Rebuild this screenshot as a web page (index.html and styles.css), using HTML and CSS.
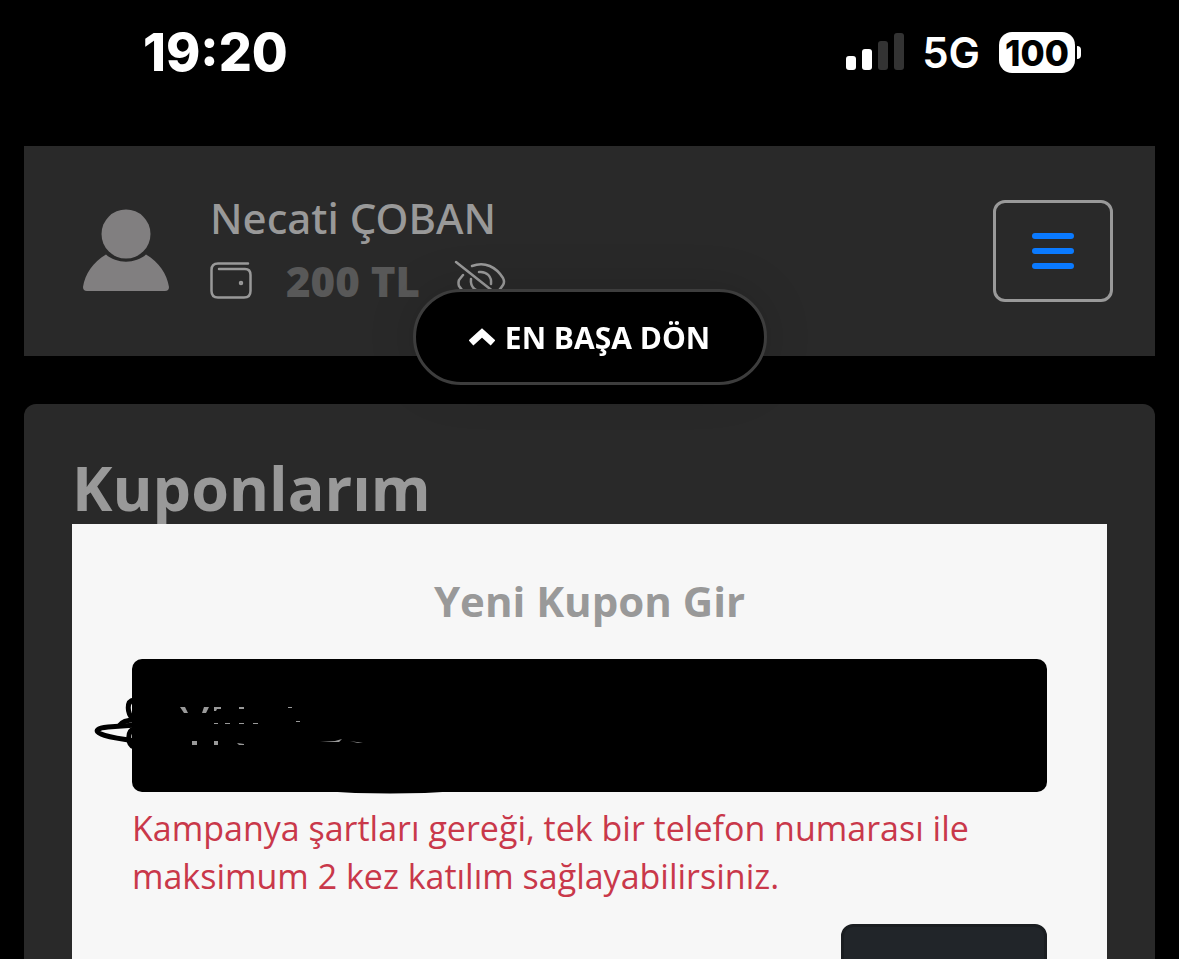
FILE: index.html
```html
<!DOCTYPE html>
<html lang="tr">
<head>
	<meta charset="UTF-8">
	<meta name="viewport" content="width=device-width, initial-scale=1">
	<title>Kuponlarım</title>
	<link rel="stylesheet" href="styles.css">
</head>
<body>
	<div class="statusBar">
		<span class="clock">19:20</span>
		<div class="statusRight">
			<svg class="signal" viewBox="0 0 58 38" aria-hidden="true">
				<rect x="0" y="23" width="10" height="14" rx="3" fill="#fff"/>
				<rect x="16" y="16" width="10" height="21" rx="3" fill="#fff"/>
				<rect x="32" y="8" width="10" height="29" rx="3" fill="#333"/>
				<rect x="48" y="0" width="10" height="37" rx="3" fill="#333"/>
			</svg>
			<span class="network">5G</span>
			<span class="battery">100</span>
		</div>
	</div>

	<header class="topBar">
		<svg class="avatar" viewBox="0 0 86 82" aria-hidden="true">
			<circle cx="43" cy="25" r="24.5"/>
			<path d="M23 45.500C33 55 53 55 63 45.500C76 53 84 65 86 78Q86 82 82 82H4Q0 82 0 78C2 65 10 53 23 45.500Z"/>
		</svg>
		<div class="user">
			<div class="userName">Necati ÇOBAN</div>
			<div class="balance">
				<svg class="wallet" viewBox="0 0 42 37" aria-hidden="true">
					<path d="M38 1.500H8Q1.500 1.500 1.500 8V29Q1.500 35.500 8 35.500H34Q40.500 35.500 40.500 29V13Q40.500 7 35 7H9"/>
					<circle cx="31" cy="21" r="1"/>
				</svg>
				<span class="amount">200 TL</span>
				<button class="eye" type="button" aria-label="Bakiyeyi göster">
					<svg viewBox="0 0 52 42" aria-hidden="true">
						<path d="M2 2L50 40"/>
						<path d="M18 6C31 1 42 7 49 18Q51 22 49 25C47 28 45 31 42 33"/>
						<path d="M9 15L5 20Q4 23 5 26C13 38 24 42 35 37"/>
						<path d="M25 12C33 11 38 17 37 24"/>
						<path d="M17 19C16 27 22 33 30 31"/>
					</svg>
				</button>
			</div>
		</div>
		<button class="menuButton" type="button" aria-label="Menü">
			<span></span>
			<span></span>
			<span></span>
		</button>
	</header>

	<button class="goTop" type="button">
		<svg viewBox="0 0 26 18" aria-hidden="true">
			<path d="M2 15L13 5L24 15"/>
		</svg>
		EN BAŞA DÖN
	</button>

	<main class="coupons">
		<h1>Kuponlarım</h1>
		<form class="card">
			<label class="cardTitle" for="code">Yeni Kupon Gir</label>
			<div class="field">
				<input type="text" id="code">
				<!-- karalama -->
				<svg class="scribble" viewBox="0 0 400 160" aria-hidden="true">
					<g class="ink">
						<path d="M54 50C46 51 47 63 53 69"/>
						<path d="M54 70C47 70 42 72 40 75"/>
						<path d="M56 75L28 77C17 78 14 81 21 84C29 88 45 89 56 91"/>
						<path d="M54 79C47 81 47 94 54 97"/>
					</g>
					<path d="M240 141H380Q310 146 240 141Z"/>
					<g class="rest">
						<path d="M100 57h5l3 6h-4zM124 57h5l-3 6h-4zM134 57h7v2h-4l-1 2h-2zM159 57h5v2h-5zM208 57h4v1h-4z"/>
						<path d="M134 73h4v1h-4zM145 73h5v1h-5zM159 73h5v1h-5zM173 73h5v1h-5zM216 71h4v1h-4z"/>
						<path d="M112 91h5v4h-5zM134 91h4v4h-4zM157 93l7 1v1h-5zM240 92l15-1 7-2-3 3zM270 91l13 2h-5z"/>
					</g>
				</svg>
			</div>
			<p class="error">Kampanya şartları gereği, tek bir telefon numarası ile maksimum 2 kez katılım sağlayabilirsiniz.</p>
			<button class="send" type="submit" aria-label="Gönder"></button>
		</form>
	</main>
</body>
</html>
```
FILE: styles.css
```css
*{
	margin: 0;
	padding: 0;
	box-sizing: border-box;
}
body{
	height: 100vh;
	overflow: hidden;
	background-color: #000;
	color: #999;
	font-family: "Open Sans", "Noto Sans", sans-serif;
}
button,
input{
	font-family: inherit;
}
.statusBar{
	display: flex;
	justify-content: space-between;
	align-items: flex-start;
	height: 146px;
	padding: 22px 104px 0 143px;
	color: #fff;
	font-family: Inter, sans-serif;
}
.clock{
	font-size: 52px;
	line-height: 62px;
	font-weight: 800;
}
.statusRight{
	display: flex;
	align-items: center;
	height: 60px;
}
.signal{
	width: 58px;
	height: 38px;
}
.network{
	margin: 0 19px 0 18px;
	font-size: 42px;
	font-weight: 600;
}
.battery{
	position: relative;
	width: 76px;
	height: 41px;
	border-radius: 13px;
	background-color: #fff;
	color: #000;
	font-size: 35px;
	line-height: 42px;
	font-weight: 800;
	text-align: center;
}
.battery::after{
	content: "";
	position: absolute;
	right: -6px;
	top: 14px;
	width: 4px;
	height: 13px;
	border-radius: 0 4px 4px 0;
	background-color: #fff;
}
.topBar{
	display: flex;
	align-items: center;
	height: 210px;
	margin: 0 24px;
	padding: 0 42px 0 59px;
	background-color: #292929;
}
.avatar{
	width: 86px;
	height: 82px;
	margin-bottom: 2px;
	fill: #817f80;
}
.user{
	margin: 0 0 4px 41px;
}
.userName{
	font-family: "Noto Sans", sans-serif;
	font-size: 42px;
	line-height: 63px;
	font-weight: 500;
}
.balance{
	display: flex;
	align-items: center;
	height: 63px;
}
.wallet{
	width: 42px;
	height: 37px;
	fill: none;
	stroke: #999;
	stroke-width: 2.5;
	stroke-linecap: round;
}
.amount{
	margin: 0 34px;
	color: #585858;
	font-size: 42px;
	font-weight: 800;
}
.eye{
	border: none;
	background: none;
}
.eye svg{
	display: block;
	width: 52px;
	height: 42px;
	fill: none;
	stroke: #999;
	stroke-width: 2.5;
	stroke-linecap: round;
}
.menuButton{
	display: flex;
	flex-direction: column;
	align-items: center;
	justify-content: center;
	gap: 9px;
	width: 120px;
	height: 102px;
	margin-left: auto;
	border: 3px solid #999;
	border-radius: 12px;
	background: none;
}
.menuButton span{
	width: 42px;
	height: 6px;
	border-radius: 3px;
	background-color: #0a7aff;
}
.goTop{
	position: fixed;
	top: 289px;
	left: 50%;
	z-index: 10;
	display: flex;
	align-items: center;
	justify-content: center;
	gap: 10px;
	width: 354px;
	height: 96px;
	margin-left: -177px;
	border: 3px solid #3d3d3d;
	border-radius: 48px;
	background-color: #000;
	box-shadow: 0 0 48px rgba(0, 0, 0, 0.15);
	color: #fff;
	font-size: 30px;
	font-weight: 700;
}
.goTop svg{
	width: 26px;
	height: 18px;
	fill: none;
	stroke: #fff;
	stroke-width: 7;
}
.coupons{
	margin: 48px 24px 0;
	padding: 48px;
	border-radius: 12px;
	background-color: #292929;
}
.coupons h1{
	font-size: 61px;
	line-height: 72px;
	font-weight: 700;
}
.card{
	position: relative;
	padding: 45px 60px 60px;
	background-color: #f7f7f7;
}
.cardTitle{
	display: block;
	margin-bottom: 27px;
	font-size: 42px;
	line-height: 63px;
	font-weight: 700;
	text-align: center;
}
.field{
	position: relative;
}
.field input{
	display: block;
	width: 100%;
	height: 133px;
	padding: 0 48px;
	border: none;
	border-radius: 10px;
	background-color: #000;
	color: #999;
	font-size: 48px;
}
.scribble{
	position: absolute;
	top: -9px;
	left: -52px;
	width: 400px;
	height: 160px;
	pointer-events: none;
}
.ink{
	fill: none;
	stroke: #000;
	stroke-width: 5;
	stroke-linecap: round;
}
.rest{
	fill: #999;
}
.error{
	margin: 12px 0 24px;
	color: #c9384a;
	font-size: 34px;
	line-height: 48px;
}
.send{
	display: block;
	width: 206px;
	height: 114px;
	margin-left: auto;
	border: 3px solid #1b1e21;
	border-radius: 12px;
	background-color: #212529;
}
```
